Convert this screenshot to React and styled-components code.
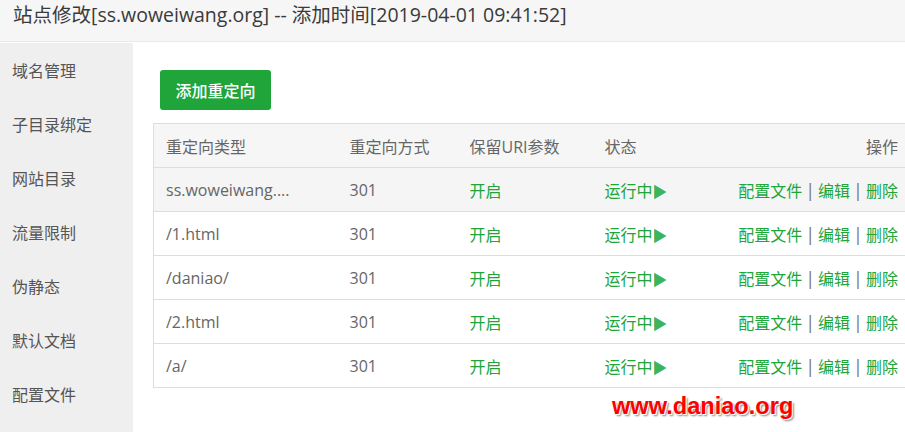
import React from "react";
import styled, { createGlobalStyle } from "styled-components";

const GlobalStyle = createGlobalStyle`
  html, body {
    margin: 0;
    padding: 0;
    background: #fff;
    overflow: hidden;
  }
  body {
    font-family: "Open Sans", "Noto Sans CJK SC", sans-serif;
    color: #555;
  }
`;

const menu = ["域名管理", "子目录绑定", "网站目录", "流量限制", "伪静态", "默认文档", "配置文件"];

const rows = [
  { type: "ss.woweiwang....", active: true },
  { type: "/1.html" },
  { type: "/daniao/" },
  { type: "/2.html" },
  { type: "/a/" },
];

function App() {
  return (
    <Page>
      <GlobalStyle />
      <Header>站点修改[ss.woweiwang.org] -- 添加时间[2019-04-01 09:41:52]</Header>
      <Body>
        <Sidebar>
          {menu.map((m) => (
            <MenuItem key={m}>{m}</MenuItem>
          ))}
        </Sidebar>
        <Main>
          <AddButton>添加重定向</AddButton>
          <Table>
            <thead>
              <tr>
                <Th $w={184}>重定向类型</Th>
                <Th $w={120}>重定向方式</Th>
                <Th $w={135}>保留URI参数</Th>
                <Th>状态</Th>
                <Th $right>操作</Th>
              </tr>
            </thead>
            <tbody>
              {rows.map((r) => (
                <Row key={r.type} $active={r.active}>
                  <Td>{r.type}</Td>
                  <Td>301</Td>
                  <Td $green>开启</Td>
                  <Td $green>
                    运行中<Arrow>▶</Arrow>
                  </Td>
                  <Td $right>
                    <Link>配置文件</Link>
                    <Sep>|</Sep>
                    <Link>编辑</Link>
                    <Sep>|</Sep>
                    <Link>删除</Link>
                  </Td>
                </Row>
              ))}
            </tbody>
          </Table>
        </Main>
      </Body>
      <Watermark>www.daniao.org</Watermark>
    </Page>
  );
}

const Page = styled.div`
  position: relative;
  width: 905px;
  height: 432px;
  overflow: hidden;
`;

const Header = styled.div`
  height: 42px;
  line-height: 30px;
  padding-left: 13px;
  background: #f6f6f6;
  border-bottom: 1px solid #e9e9e9;
  font-size: 19.5px;
  color: #3a3a3a;
  white-space: nowrap;
  box-sizing: border-box;
`;

const Body = styled.div`
  display: flex;
  padding-top: 1px;
  height: 390px;
`;

const Sidebar = styled.div`
  width: 133px;
  flex-shrink: 0;
  background: #efefef;
  padding-top: 1px;
`;

const MenuItem = styled.div`
  height: 54px;
  line-height: 54px;
  padding-left: 12px;
  font-size: 16px;
  color: #555;
`;

const Main = styled.div`
  flex: 1;
  padding: 27px 0 0 20px;
`;

const AddButton = styled.button`
  display: block;
  margin-left: 7px;
  width: 111px;
  height: 40px;
  border: none;
  border-radius: 3px;
  background: #20a53a;
  color: #fff;
  font-family: "Open Sans", "Noto Sans CJK SC", sans-serif;
  font-size: 16px;
  font-weight: 500;
  padding: 0;
`;

const Table = styled.table`
  margin-top: 13px;
  width: 755px;
  border-collapse: collapse;
  border: 1px solid #ddd;
  font-size: 16px;
`;

const Th = styled.th`
  height: 44px;
  padding: 0 ${(p) => (p.$right ? "9px" : "12px")} 0 12px;
  text-align: ${(p) => (p.$right ? "right" : "left")};
  width: ${(p) => (p.$w ? `${p.$w}px` : "auto")};
  box-sizing: border-box;
  font-weight: normal;
  color: #666;
  background: #f6f6f6;
  border-bottom: 1px solid #ddd;
`;

const Row = styled.tr`
  background: ${(p) => (p.$active ? "#f5f5f5" : "#fff")};
  border-bottom: 1px solid #ddd;
`;

const Td = styled.td`
  height: 43px;
  padding: 0 ${(p) => (p.$right ? "9px" : "12px")} 0 12px;
  text-align: ${(p) => (p.$right ? "right" : "left")};
  color: ${(p) => (p.$green ? "#20a53a" : "#666")};
  white-space: nowrap;
`;

const Arrow = styled.span`
  display: inline-block;
  font-size: 19px;
  line-height: 16px;
  margin-left: 1px;
  transform: scaleX(0.85);
  transform-origin: left center;
  font-family: "DejaVu Sans", sans-serif;
  color: #3cb55a;
`;

const Link = styled.span`
  color: #20a53a;
`;

const Sep = styled.span`
  color: #777;
  font-size: 18px;
  margin: 0 3px;
`;

const Watermark = styled.div`
  position: absolute;
  left: 612px;
  top: 393px;
  font-family: "Liberation Sans", Arial, sans-serif;
  font-weight: bold;
  font-size: 23.6px;
  color: #ff0000;
  text-shadow: 1px 1px 0 #fff, 2px 2px 2px #888;
`;

export default App;
